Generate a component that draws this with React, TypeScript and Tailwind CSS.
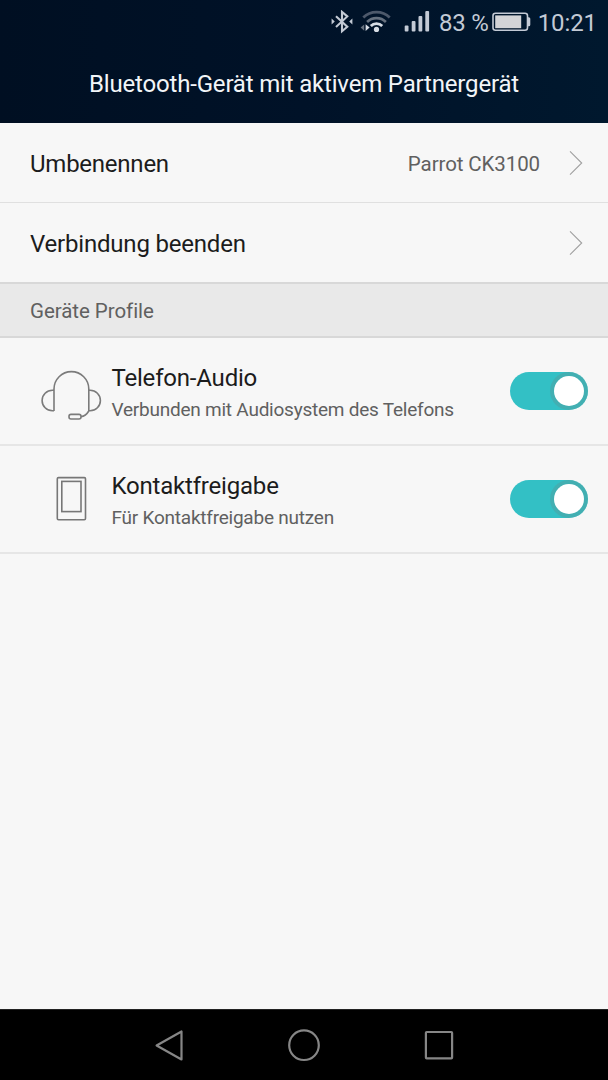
import { useState } from "react";

function Bluetooth() {
  return (
    <svg width="22" height="24" viewBox="0 0 22 24" fill="none" stroke="#c3cad5" strokeWidth="2.1" className="shrink-0">
      <path d="M5 6.2 16.3 16.8 11 21.3V1.9L16.3 6.4 5 17" />
      <path d="M0.6 8.6 3.8 11.6 0.6 14.6ZM21.4 8.6 18.2 11.6 21.4 14.6Z" fill="#c3cad5" stroke="none" />
    </svg>
  );
}

function Wifi() {
  return (
    <svg width="32" height="24" viewBox="0 0 32 24" fill="none" className="shrink-0">
      <path d="M3.3 7.5a18.8 18.8 0 0 1 26.4 0" stroke="#4d596b" strokeWidth="2.8" />
      <path d="M7.1 12a13.4 13.4 0 0 1 18.8 0" stroke="#66717f" strokeWidth="2.6" />
      <path d="M10.8 16a8 8 0 0 1 11.4 0" stroke="#d7dde5" strokeWidth="2.8" />
      <circle cx="16.5" cy="19.4" r="2.6" fill="#d7dde5" />
      <path d="M4.2 14.4v6.4L0.6 17.6Z" fill="#66717f" />
      <path d="M5.6 14.2v6.8l4-3.4Z" fill="#d7dde5" />
    </svg>
  );
}

function Signal() {
  return (
    <svg width="26" height="22" viewBox="0 0 26 22" fill="#c3cad5" className="shrink-0">
      <rect x="0.7" y="14.6" width="3.8" height="6" rx="1" />
      <rect x="7.7" y="10.1" width="3.8" height="10.5" rx="1" />
      <rect x="14.5" y="5.1" width="3.8" height="15.5" rx="1" />
      <rect x="21.3" y="0" width="3.8" height="20.6" rx="1" />
    </svg>
  );
}

function Battery() {
  return (
    <svg width="39" height="20" viewBox="0 0 39 20" fill="none" className="shrink-0">
      <rect x="1" y="1.3" width="34.5" height="17" rx="2.5" stroke="#c3cad5" strokeWidth="1.6" />
      <rect x="3.2" y="3.4" width="26" height="12.8" fill="#d3d4d7" />
      <path d="M36 5.3h0.8a1.5 1.5 0 0 1 1.5 1.5v6a1.5 1.5 0 0 1-1.5 1.5h-0.8Z" fill="#c3cad5" />
    </svg>
  );
}

function Chevron() {
  return (
    <svg width="14" height="26" viewBox="0 0 14 26" fill="none" stroke="#a0a0a0" strokeWidth="1.1" className="shrink-0">
      <path d="M1 1.3 12.7 13 1 24.7" />
    </svg>
  );
}

function Headset() {
  return (
    <svg width="62" height="54" viewBox="0 0 62 54" fill="none" stroke="#7b7b7b" strokeWidth="1.6" className="shrink-0 overflow-visible">
      <path d="M14 47V25A17.4 17.4 0 0 1 48.8 25V47" />
      <path d="M14 26.2H12.4a10.3 10.3 0 0 0 0 20.6H14M48.8 26.2h1.3a10.3 10.3 0 0 1 0 20.6H48.8" />
      <path d="M48.8 47C46.9 50.2 44.7 52.2 41 52.6" />
      <rect x="29" y="50.4" width="12" height="4.6" rx="2" />
    </svg>
  );
}

function Phone() {
  return (
    <svg width="62" height="54" viewBox="0 0 62 54" fill="none" stroke="#777777" strokeWidth="1.6" className="shrink-0">
      <rect x="17.3" y="5.6" width="28.2" height="42.2" rx="1.2" />
      <rect x="21.8" y="9.4" width="19.2" height="30.2" />
    </svg>
  );
}

function Toggle({ label }: { label: string }) {
  const [on, setOn] = useState(true);
  return (
    <button
      role="switch"
      aria-checked={on}
      aria-label={label}
      onClick={() => setOn(!on)}
      className={`flex h-[38px] w-[78px] shrink-0 items-center rounded-full pr-[4px] pl-[4px] ${on ? "justify-end bg-[#33c0c5]" : "justify-start bg-gray-300"}`}
    >
      <span className="size-[30px] rounded-full bg-white shadow-[0_0_0_4px_rgba(85,155,155,0.45)]" />
    </button>
  );
}

function Profile({ icon, title, detail }: { icon: React.ReactNode; title: string; detail: string }) {
  return (
    <li className="flex h-[108px] items-center border-b-2 border-[#e6e6e6] pr-5 pl-10">
      {icon}
      <div className="ml-[9.5px] flex-1 pt-[5px] whitespace-nowrap">
        <div className="text-[24px] leading-8 tracking-[-0.2px] text-[#1c1c1c]">{title}</div>
        <div className="text-[19px] leading-[31px] tracking-[-0.23px] text-[#606060]">{detail}</div>
      </div>
      <Toggle label={title} />
    </li>
  );
}

export default function App() {
  return (
    <div className="flex h-[1080px] w-[608px] flex-col overflow-hidden bg-[#f7f7f7] font-['Roboto',sans-serif]">
      <header className="flex h-[123px] shrink-0 flex-col bg-linear-to-r from-[#000f22] via-[#001228] to-[#00182e]">
        <div className="flex h-[43px] items-center justify-end pr-[11px] text-[24px] whitespace-nowrap text-[#c3cad5]">
          <Bluetooth />
          <div className="ml-[7px] flex"><Wifi /></div>
          <div className="ml-3 flex"><Signal /></div>
          <span className="ml-[9px] pt-0.5 tracking-[-0.2px]">83 %</span>
          <div className="ml-[3px] flex"><Battery /></div>
          <span className="ml-[7px] pt-0.5 tracking-[-0.1px]">10:21</span>
        </div>
        <h1 className="flex h-20 items-center justify-center pt-0.5 text-[24px] tracking-[-0.18px] whitespace-nowrap text-[#f2f5f8]">
          Bluetooth-Gerät mit aktivem Partnergerät
        </h1>
      </header>
      <main className="flex-1">
        <div className="flex h-20 items-center border-b border-[#e0e0e0] pr-[25px] pl-[30px] text-[24px] tracking-[-0.24px] text-[#1c1c1c]">
          <span className="flex-1 pt-0.5">Umbenennen</span>
          <span className="mr-[29px] pt-[3px] text-[20.5px] tracking-[-0.1px] text-[#606060]">Parrot CK3100</span>
          <Chevron />
        </div>
        <div className="flex h-[79px] items-center pr-[25px] pl-[30px] text-[24px] tracking-[-0.2px] text-[#1c1c1c]">
          <span className="flex-1 pt-[3px]">Verbindung beenden</span>
          <Chevron />
        </div>
        <h2 className="flex h-14 items-center border-y-2 border-[#d8d8d8] bg-[#e9e9e9] pt-0.5 pl-[30px] text-[20.5px] tracking-[-0.05px] text-[#606060]">
          Geräte Profile
        </h2>
        <ul>
          <Profile icon={<Headset />} title="Telefon-Audio" detail="Verbunden mit Audiosystem des Telefons" />
          <Profile icon={<Phone />} title="Kontaktfreigabe" detail="Für Kontaktfreigabe nutzen" />
        </ul>
      </main>
      <nav className="flex h-[71px] shrink-0 justify-center gap-[99px] border-t border-[#222222] bg-black pt-[17px]">
        <svg width="36" height="36" viewBox="0 0 36 36" fill="none" stroke="#868686" strokeWidth="2.2" strokeLinejoin="round">
          <path d="M30.5 4.5v28L5.6 18.5Z" />
        </svg>
        <svg width="36" height="36" viewBox="0 0 36 36" fill="none" stroke="#868686" strokeWidth="2.2">
          <circle cx="18" cy="18.2" r="14.8" />
        </svg>
        <svg width="36" height="36" viewBox="0 0 36 36" fill="none" stroke="#868686" strokeWidth="2.2">
          <rect x="4.9" y="5" width="26.2" height="26.4" rx="0.8" />
        </svg>
      </nav>
    </div>
  );
}
